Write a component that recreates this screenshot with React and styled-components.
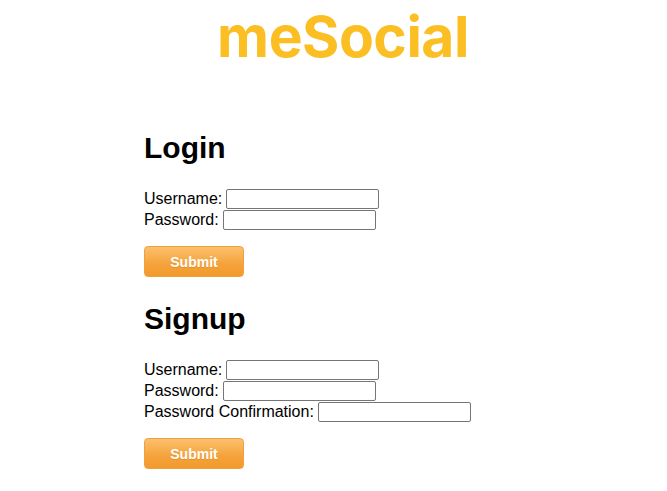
import React from 'react'
import styled, { createGlobalStyle } from 'styled-components'

const GlobalStyle = createGlobalStyle`
    body {
        margin: 0;
        background: #fff;
        font-family: "Liberation Sans", Arial, sans-serif;
        color: #000;
    }
`;

const Page = styled.div`
    width: 100%;
    display: flex;
    flex-direction: column;
`;

const Title = styled.h1`
    margin: 8px 0 0 0;
    padding-left: 19px;
    text-align: center;
    font-family: Inter, "Liberation Sans", Arial, sans-serif;
    font-size: 57px;
    line-height: 1;
    font-weight: 700;
    letter-spacing: -0.5px;
    color: #fbbf24;
`;

const Main = styled.main`
    display: flex;
    flex-direction: column;
    padding-left: 144px;
`;

const Section = styled.section`
    display: flex;
    flex-direction: column;
    align-items: flex-start;
    margin-top: ${p => p.$top}px;
`;

const Heading = styled.h2`
    margin: 0 0 25px 0;
    font-size: 30px;
    line-height: 1;
    font-weight: 700;
`;

const Form = styled.form`
    display: flex;
    flex-direction: column;
    align-items: flex-start;
`;

const Row = styled.label`
    display: flex;
    align-items: center;
    height: 21px;
    font-size: 16px;
    line-height: 21px;
`;

const Input = styled.input`
    box-sizing: border-box;
    width: 153px;
    height: 20px;
    margin: 0 0 0 4px;
    padding: 1px 3px;
    border: 1px solid #767676;
    border-radius: 2px;
    font-size: 13px;
    background: #fff;
`;

const SubmitButton = styled.button`
    margin-top: 16px;
    width: 100px;
    height: 31px;
    border: 1px solid #f0a040;
    border-radius: 4px;
    background: linear-gradient(to bottom, #fbc06e 0%, #f5a23a 60%, #f29a2c 100%);
    color: #fff;
    font-family: "Liberation Sans", Arial, sans-serif;
    font-size: 14px;
    font-weight: 700;
    text-shadow: 0 1px 0 rgba(200, 120, 30, 0.4);
    cursor: pointer;
`;

const LoginForm = () => (
    <Section $top={68}>
        <Heading>Login</Heading>
        <Form onSubmit={e => e.preventDefault()}>
            <Row>Username:<Input type="text" /></Row>
            <Row>Password:<Input type="password" /></Row>
            <SubmitButton type="submit">Submit</SubmitButton>
        </Form>
    </Section>
);

const SignupForm = () => (
    <Section $top={27}>
        <Heading>Signup</Heading>
        <Form onSubmit={e => e.preventDefault()}>
            <Row>Username:<Input type="text" /></Row>
            <Row>Password:<Input type="password" /></Row>
            <Row>Password Confirmation:<Input type="password" /></Row>
            <SubmitButton type="submit">Submit</SubmitButton>
        </Form>
    </Section>
);

export default function App() {
    return (
        <Page>
            <GlobalStyle />
            <Title>meSocial</Title>
            <Main>
                <LoginForm />
                <SignupForm />
            </Main>
        </Page>
    );
}
